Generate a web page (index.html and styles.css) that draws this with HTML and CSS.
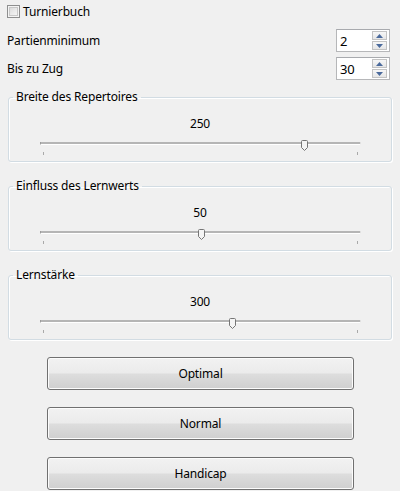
FILE: index.html
```html
<!DOCTYPE html>
<html lang="de">
<head>
<meta charset="utf-8">
<link rel="stylesheet" href="styles.css">
</head>
<body>
<div class="page">
  <label class="check-row">
    <span class="checkbox"></span>
    <span>Turnierbuch</span>
  </label>

  <div class="spin-row first">
    <span>Partienminimum</span>
    <div class="spinbox">
      <span class="spin-value">2</span>
      <div class="spin-buttons">
        <span class="spin-btn"><svg width="7" height="4" viewBox="0 0 7 4"><path d="M0 4 L3.5 0 L7 4 Z" fill="#4b6a9c"/></svg></span>
        <span class="spin-btn"><svg width="7" height="4" viewBox="0 0 7 4"><path d="M0 0 L3.5 4 L7 0 Z" fill="#4b6a9c"/></svg></span>
      </div>
    </div>
  </div>

  <div class="spin-row">
    <span>Bis zu Zug</span>
    <div class="spinbox">
      <span class="spin-value">30</span>
      <div class="spin-buttons">
        <span class="spin-btn"><svg width="7" height="4" viewBox="0 0 7 4"><path d="M0 4 L3.5 0 L7 4 Z" fill="#4b6a9c"/></svg></span>
        <span class="spin-btn"><svg width="7" height="4" viewBox="0 0 7 4"><path d="M0 0 L3.5 4 L7 0 Z" fill="#4b6a9c"/></svg></span>
      </div>
    </div>
  </div>

  <fieldset class="group">
    <legend>Breite des Repertoires</legend>
    <div class="value">250</div>
    <div class="slider">
      <div class="track"></div>
      <span class="tick tick-l"></span>
      <span class="tick tick-r"></span>
      <svg class="handle" style="left:82.2%" width="7" height="11" viewBox="0 0 7 11"><path d="M1.5 0.5 H5.5 Q6.5 0.5 6.5 1.5 V7.5 L3.5 10.5 L0.5 7.5 V1.5 Q0.5 0.5 1.5 0.5 Z" fill="#f4f4f4" stroke="#767676"/></svg>
    </div>
  </fieldset>

  <fieldset class="group">
    <legend>Einfluss des Lernwerts</legend>
    <div class="value">50</div>
    <div class="slider">
      <div class="track"></div>
      <span class="tick tick-l"></span>
      <span class="tick tick-r"></span>
      <svg class="handle" style="left:50.2%" width="7" height="11" viewBox="0 0 7 11"><path d="M1.5 0.5 H5.5 Q6.5 0.5 6.5 1.5 V7.5 L3.5 10.5 L0.5 7.5 V1.5 Q0.5 0.5 1.5 0.5 Z" fill="#f4f4f4" stroke="#767676"/></svg>
    </div>
  </fieldset>

  <fieldset class="group">
    <legend>Lernstärke</legend>
    <div class="value">300</div>
    <div class="slider">
      <div class="track"></div>
      <span class="tick tick-l"></span>
      <span class="tick tick-r"></span>
      <svg class="handle" style="left:59.8%" width="7" height="11" viewBox="0 0 7 11"><path d="M1.5 0.5 H5.5 Q6.5 0.5 6.5 1.5 V7.5 L3.5 10.5 L0.5 7.5 V1.5 Q0.5 0.5 1.5 0.5 Z" fill="#f4f4f4" stroke="#767676"/></svg>
    </div>
  </fieldset>

  <div class="buttons">
    <button class="btn">Optimal</button>
    <button class="btn">Normal</button>
    <button class="btn">Handicap</button>
  </div>
</div>
</body>
</html>
```

FILE: styles.css
```css
html, body {
  margin: 0;
  padding: 0;
  background: #f0f0f0;
}

body {
  font-family: "Noto Sans", "Open Sans", sans-serif;
  font-size: 12px;
  letter-spacing: -0.15px;
  color: #000;
  width: 400px;
  height: 491px;
  overflow: hidden;
}

.page {
  display: flex;
  flex-direction: column;
}

.check-row {
  display: flex;
  align-items: center;
  gap: 3px;
  margin: 5px 0 0 7px;
  height: 13px;
  line-height: 16px;
}

.checkbox {
  box-sizing: border-box;
  width: 13px;
  height: 13px;
  border: 1px solid #8e8f8f;
  background: linear-gradient(135deg, #d4d4d4 0%, #e9e9e9 50%, #fbfbfb 100%);
  box-shadow: inset 0 0 0 1px #f4f4f4, inset 0 0 0 2px #c8c8c8;
}

.spin-row {
  display: flex;
  align-items: center;
  justify-content: space-between;
  padding: 0 10px 0 7px;
  margin-top: 5px;
  height: 23px;
}

.spin-row.first {
  margin-top: 11px;
}

.spinbox {
  box-sizing: border-box;
  width: 54px;
  height: 23px;
  border: 1px solid #b6b7b9;
  border-top-color: #a8aaae;
  background: #fff;
  display: flex;
  align-items: center;
  justify-content: space-between;
  padding: 0 2px 0 3px;
}

.spin-value {
  font-size: 13px;
  line-height: 16px;
}

.spin-buttons {
  display: flex;
  flex-direction: column;
  gap: 1px;
}

.spin-btn {
  box-sizing: border-box;
  width: 15px;
  height: 9px;
  border: 1px solid #c3c3c3;
  background: linear-gradient(#f7f7f7, #e6e6e6);
  display: flex;
  align-items: center;
  justify-content: center;
}

.group {
  margin: 9px 8px 0 8px;
  padding: 0 0 5px 0;
  border: 1px solid #d2dce3;
  border-radius: 3px;
  box-shadow: inset 1px 1px 0 #fff, 1px 1px 0 #fff;
  min-width: 0;
}

.group + .group {
  margin-top: 16px;
}

.group legend {
  margin-left: 4px;
  padding: 0 3px;
  line-height: 16px;
}

.value {
  text-align: center;
  line-height: 16px;
  margin-top: 11px;
}

.slider {
  position: relative;
  margin: 7px 30px 0 31px;
  height: 17px;
}

.track {
  position: absolute;
  left: 0;
  right: 0;
  top: 3px;
  height: 2px;
  background: #b5b5b5;
  border-bottom: 1px solid #fff;
  border-left: 1px solid #9c9c9c;
  border-right: 1px solid #e0e0e0;
}

.tick {
  position: absolute;
  top: 13px;
  width: 1px;
  height: 3px;
  background: #a9a9a9;
}

.tick-l { left: 3px; }
.tick-r { right: 3px; }

.handle {
  position: absolute;
  top: 1px;
  margin-left: -3px;
}

.buttons {
  display: flex;
  flex-direction: column;
  gap: 17px;
  margin: 17px 0 0 47px;
}

.btn {
  box-sizing: border-box;
  width: 307px;
  height: 33px;
  border: 1px solid #707070;
  border-radius: 3px;
  background: linear-gradient(#f2f2f2 0%, #ebebeb 48%, #dddddd 52%, #cfcfcf 100%);
  box-shadow: inset 0 0 0 1px #fcfcfc;
  font-family: "Noto Sans", "Open Sans", sans-serif;
  font-size: 12px;
  letter-spacing: -0.15px;
  color: #000;
  padding: 0;
}
```
